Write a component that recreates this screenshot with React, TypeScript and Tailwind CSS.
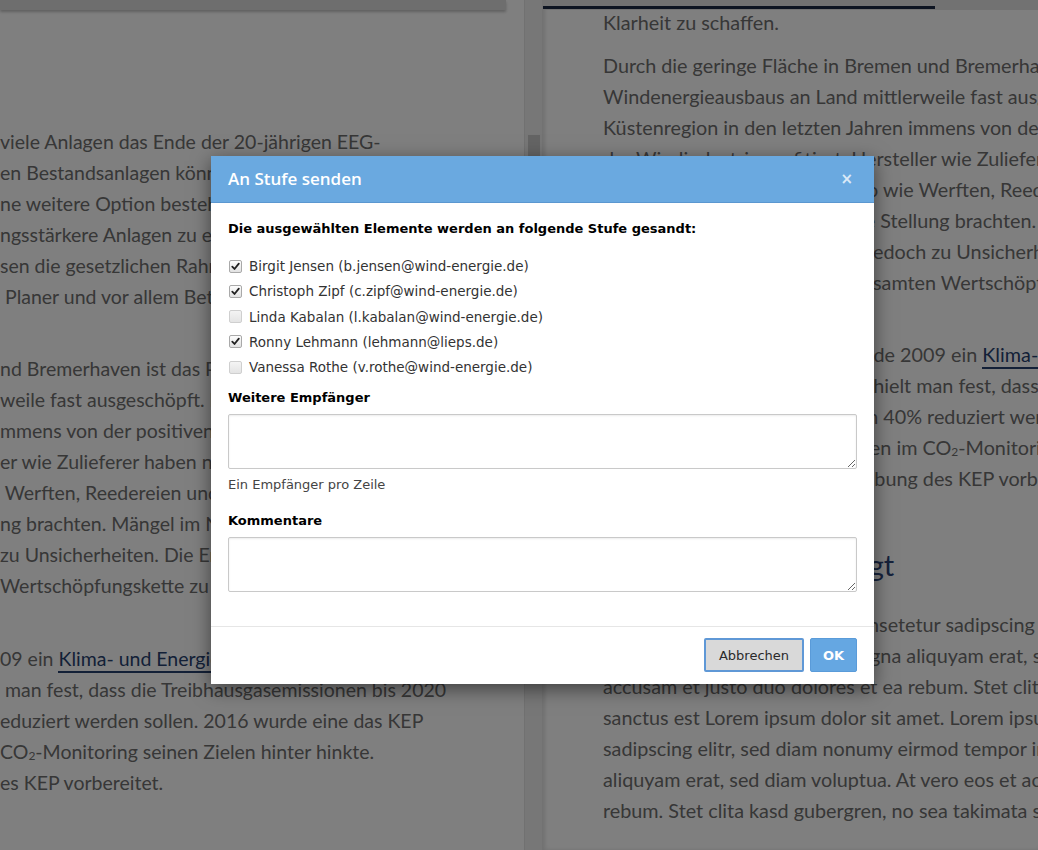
import React from "react";

const bgFont = { fontFamily: "Lato, 'Open Sans', sans-serif" };
const uiFont = { fontFamily: "'DejaVu Sans', Verdana, sans-serif" };

function Line({ children }: { children: React.ReactNode }) {
  return <div className="whitespace-pre leading-[31px] h-[31px]">{children}</div>;
}

function Link({ children }: { children: React.ReactNode }) {
  return <span className="text-[#27416f] border-b-2 border-[#27416f] pb-[1px]">{children}</span>;
}

function CO2() {
  return (
    <>
      CO<sub className="text-[12px] relative top-[1px]">2</sub>
    </>
  );
}

function Check({ checked }: { checked: boolean }) {
  return (
    <span
      className={
        "flex items-center justify-center w-[13px] h-[13px] rounded-[2px] border shrink-0 " +
        (checked
          ? "border-[#a9a9a9] bg-gradient-to-b from-[#fdfdfd] to-[#e2e2e2]"
          : "border-[#cfcfcf] bg-gradient-to-b from-[#f4f4f4] to-[#e4e4e4]")
      }
    >
      {checked && (
        <svg width="9" height="9" viewBox="0 0 9 9">
          <path d="M1.3 4.6 L3.5 7 L7.8 1.6" fill="none" stroke="#222" strokeWidth="1.8" strokeLinecap="round" strokeLinejoin="round" />
        </svg>
      )}
    </span>
  );
}

const people: [string, boolean][] = [
  ["Birgit Jensen (b.jensen@wind-energie.de)", true],
  ["Christoph Zipf (c.zipf@wind-energie.de)", true],
  ["Linda Kabalan (l.kabalan@wind-energie.de)", false],
  ["Ronny Lehmann (lehmann@lieps.de)", true],
  ["Vanessa Rothe (v.rothe@wind-energie.de)", false],
];

export default function App() {
  return (
    <div className="relative w-[1038px] h-[850px] overflow-hidden bg-white" style={bgFont}>
      <div className="flex h-full">
        {/* left page */}
        <div className="w-[524px] h-full overflow-hidden bg-white flex flex-col">
          <div className="h-[10px] w-[506px] bg-[#dcdcdc] shadow-[0_2px_3px_rgba(0,0,0,0.25)] shrink-0" />
          <div className="text-[19.5px] text-[#6e6e6e] pl-0">
            <div className="mt-[115.5px]">
              <Line>viele Anlagen das Ende der 20-jährigen EEG-</Line>
              <Line>en Bestandsanlagen können durch neuere,</Line>
              <Line>ne weitere Option besteht darin, alte</Line>
              <Line>ngsstärkere Anlagen zu ersetzen.</Line>
              <Line>sen die gesetzlichen Rahmenbedingungen</Line>
              <Line> Planer und vor allem Betreiber.</Line>
            </div>
            <div className="mt-[41px]">
              <Line>nd Bremerhaven ist das Potenzial des</Line>
              <Line>weile fast ausgeschöpft. Dennoch hat die</Line>
              <Line>mmens von der positiven Entwicklung</Line>
              <Line>er wie Zulieferer haben nicht nur</Line>
              <Line> Werften, Reedereien und Häfen</Line>
              <Line>ng brachten. Mängel im Netzausbau</Line>
              <Line>zu Unsicherheiten. Die Entwicklung</Line>
              <Line>Wertschöpfungskette zu beobachten.</Line>
            </div>
            <div className="mt-[42px]">
              <Line>
                09 ein <Link>Klima- und Energieprogramm</Link>
              </Line>
              <Line> man fest, dass die Treibhausgasemissionen bis 2020</Line>
              <Line>eduziert werden sollen. 2016 wurde eine das KEP</Line>
              <Line>
                <CO2 />-Monitoring seinen Zielen hinter hinkte.
              </Line>
              <Line>es KEP vorbereitet.</Line>
            </div>
          </div>
        </div>

        {/* scrollbar */}
        <div className="w-[18px] h-full bg-[#eeeeee] border-l border-[#e2e2e2] flex flex-col">
          <div className="mt-[135px] mx-auto w-[12px] h-[200px] bg-[#c9c9c9]" />
        </div>

        {/* right page */}
        <div className="flex-1 h-full overflow-hidden bg-white shadow-[inset_3px_0_4px_rgba(0,0,0,0.12)] flex flex-col">
          <div className="h-[10px] shrink-0 bg-[#e4e4e4] relative">
            <div className="w-[392px] ml-[1px] h-[9px] border-b-[3px] border-[#1c2a44]" />
          </div>
          <div className="pl-[61px] text-[19.8px] text-[#6e6e6e] -mt-[3.5px]">
            <Line>Klarheit zu schaffen.</Line>
            <div className="mt-[12px]">
              <Line>Durch die geringe Fläche in Bremen und Bremerhaven ist das Potenzial des</Line>
              <Line>Windenergieausbaus an Land mittlerweile fast ausgeschöpft. Dennoch hat die</Line>
              <Line>Küstenregion in den letzten Jahren immens von der positiven Entwicklung</Line>
              <Line>der Windindustrie profitiert. Hersteller wie Zulieferer haben nicht nur</Line>
              <Line>eine gute Auftragslage, genauso wie Werften, Reedereien und Häfen</Line>
              <Line>Häfen in eine so hervorragende Stellung brachten. Mängel im Netzausbau</Line>
              <Line>Mängel im Netzausbau führen jedoch zu Unsicherheiten. Die Entwicklung</Line>
              <Line>Die weitere Entwicklung der gesamten Wertschöpfungskette bleibt abzuwarten.</Line>
            </div>
            <div className="mt-[41px]">
              <Line>
                Der Bremer Senat beschloss Ende 2009 ein <Link>Klima- und Energieprogramm</Link>
              </Line>
              <Line>In dem zugehörigen Programm hielt man fest, dass die Treibhausgasemissionen</Line>
              <Line>alle Treibhausgasemissionen um 40% reduziert werden sollen.</Line>
              <Line>
                Die Zwischenbilanzen erschienen im <CO2 />-Monitoring 2016.
              </Line>
              <Line>Momentan wird eine Fortschreibung des KEP vorbereitet.</Line>
            </div>
            <div className="mt-[51px] text-[29px] leading-[40px] h-[40px] text-[#2c4577] whitespace-pre">
              Was die Zukunft bringt
            </div>
            <div className="mt-[24.5px]">
              <Line>Lorem ipsum dolor sit amet, consetetur sadipscing elitr, sed diam nonumy eirmod tempor</Line>
              <Line>invidunt ut labore et dolore magna aliquyam erat, sed diam voluptua. At vero eos et</Line>
              <Line>accusam et justo duo dolores et ea rebum. Stet clita kasd gubergren, no sea takimata</Line>
              <Line>sanctus est Lorem ipsum dolor sit amet. Lorem ipsum dolor sit amet, consetetur</Line>
              <Line>sadipscing elitr, sed diam nonumy eirmod tempor invidunt ut labore et dolore magna</Line>
              <Line>aliquyam erat, sed diam voluptua. At vero eos et accusam et justo duo dolores et ea</Line>
              <Line>rebum. Stet clita kasd gubergren, no sea takimata sanctus est Lorem ipsum dolor sit amet.</Line>
            </div>
          </div>
        </div>
      </div>

      {/* overlay */}
      <div className="absolute inset-0 bg-black/50" />

      {/* modal */}
      <div
        className="absolute left-[211px] top-[156px] w-[663px] bg-white shadow-[0_5px_18px_rgba(0,0,0,0.5)]"
        style={uiFont}
      >
        <div className="h-[47px] bg-[#6aa9e0] border-b border-[#5b97d0] flex items-center justify-between pl-[17px] pr-[21px]">
          <span className="text-white text-[17px] font-semibold" style={{ fontFamily: "'Open Sans', sans-serif" }}>
            An Stufe senden
          </span>
          <span className="text-[#dbe9f7] text-[15px] font-bold leading-none">×</span>
        </div>

        <div className="px-[17px] pt-[17px] pb-[34px] text-[#222]">
          <div className="text-[13px] font-bold leading-[18px] text-black">
            Die ausgewählten Elemente werden an folgende Stufe gesandt:
          </div>
          <div className="mt-[15.5px]">
            {people.map(([label, checked]) => (
              <div key={label} className="h-[25.25px] flex items-center pl-[1px] gap-[7px]">
                <Check checked={checked} />
                <span className="text-[13.5px] leading-[18px] text-[#333]">{label}</span>
              </div>
            ))}
          </div>
          <div className="mt-[9.5px] text-[13px] font-bold leading-[18px] text-black">Weitere Empfänger</div>
          <textarea className="mt-[7px] block w-full h-[55px] border border-[#c9c9c9] rounded-[2px] shadow-[inset_0_1px_2px_rgba(0,0,0,0.08)] outline-none" />
          <div className="mt-[8px] text-[13px] leading-[16px] text-[#444]">Ein Empfänger pro Zeile</div>
          <div className="mt-[19px] text-[13px] font-bold leading-[18px] text-black">Kommentare</div>
          <textarea className="mt-[7px] block w-full h-[55px] border border-[#c9c9c9] rounded-[2px] shadow-[inset_0_1px_2px_rgba(0,0,0,0.08)] outline-none" />
        </div>

        <div className="border-t border-[#e6e6e6] pt-[11px] pb-[12px] px-[17px] flex justify-end gap-[6px]">
          <button className="h-[34px] w-[100px] bg-[#d9d9d9] border-2 border-[#5f98d6] rounded-[2px] text-[13px] text-[#2a2a2a]">
            Abbrechen
          </button>
          <button className="h-[34px] w-[47px] bg-[#65a7e2] border border-[#5a9bd9] rounded-[2px] text-[13px] font-bold text-white">
            OK
          </button>
        </div>
      </div>
    </div>
  );
}
